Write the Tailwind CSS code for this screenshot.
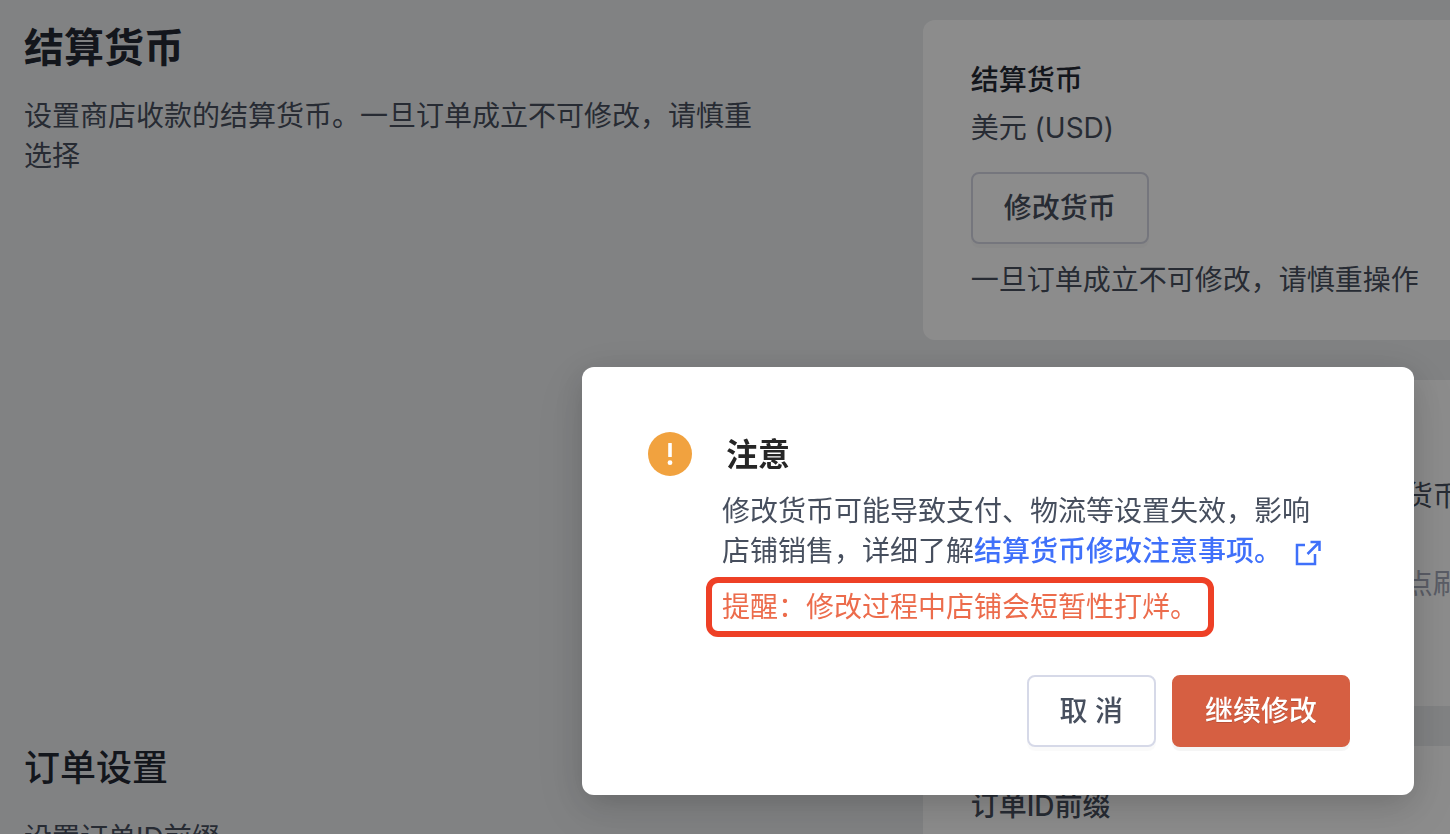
<!DOCTYPE html>
<html lang="zh-CN">
<head>
  <meta charset="UTF-8">
  <meta name="viewport" content="width=device-width, initial-scale=1.0">
  <title>结算货币</title>
  <script src="https://cdn.jsdelivr.net/npm/@tailwindcss/browser@4"></script>
</head>
<body class="h-screen overflow-hidden bg-[#ebedef] font-['Inter','Noto_Sans_CJK_SC',sans-serif] text-[28px] leading-10 text-[#474f5e]">
  <main class="grid grid-cols-[7fr_4fr] gap-y-10 pt-5">
    <!-- Settlement currency -->
    <section class="row-span-2 pl-6">
      <h1 class="text-[40px] leading-14 font-bold text-[#242833]">结算货币</h1>
      <p class="mt-5 max-w-[755px]">设置商店收款的结算货币。一旦订单成立不可修改，请慎重选择</p>
    </section>
    <section class="min-w-0 rounded-l-xl bg-white px-12 py-10 whitespace-nowrap">
      <h2 class="font-medium text-[#242833]">结算货币</h2>
      <p class="mt-2">美元 (USD)</p>
      <button type="button" class="mt-6 block h-18 rounded-lg border-2 border-[#d6d8e4] bg-white px-[31px] font-medium shadow-[0_4px_0_rgba(0,0,0,0.02)]">修改货币</button>
      <p class="mt-4">一旦订单成立不可修改，请慎重操作</p>
    </section>
    <section class="min-h-[326px] min-w-0 overflow-hidden rounded-l-xl bg-white pt-24 pl-12 whitespace-nowrap">
      <p class="pl-[434px]">货币</p>
      <p class="mt-12 pl-[434px] text-[#a3a8b8]">点刷新</p>
    </section>

    <!-- Order settings -->
    <section class="pl-6">
      <h2 class="text-[36px] leading-11 font-medium text-[#242833]">订单设置</h2>
      <p class="mt-7">设置订单ID前缀</p>
    </section>
    <section class="min-w-0 rounded-tl-xl bg-white px-12 py-10">
      <h3 class="font-medium">订单ID前缀</h3>
    </section>
  </main>

  <!-- Confirm dialog -->
  <div class="fixed inset-0 flex items-start justify-end bg-black/45 pt-[367px] pr-9">
    <div role="dialog" aria-modal="true" aria-labelledby="dialog-title" class="w-[832px] rounded-xl bg-white px-16 pt-16 pb-12 shadow-[0_8px_32px_rgba(0,0,0,0.15),0_16px_56px_12px_rgba(0,0,0,0.06)]">
      <div class="flex gap-7">
        <svg class="size-12 shrink-0" viewBox="0 0 48 48" aria-hidden="true">
          <circle cx="24" cy="23" r="22" fill="#f1a23f"/>
          <rect x="22.2" y="12" width="3.6" height="14" rx="0.5" fill="#fff"/>
          <circle cx="24" cy="31.7" r="2.4" fill="#fff"/>
        </svg>
        <div class="min-w-0 flex-1">
          <h2 id="dialog-title" class="pl-1 text-[32px] leading-12 font-bold text-[#262626]">注意</h2>
          <p class="mt-3 whitespace-nowrap">修改货币可能导致支付、物流等设置失效，影响<br>店铺销售，详细了解<a href="#" class="font-medium text-[#3f70fa]">结算货币修改注意事项。<svg class="ml-3 inline-block size-7" viewBox="0 0 28 28" fill="none" stroke="currentColor" stroke-width="2.5" aria-hidden="true">
            <path d="M11 6H3V25H21V15"/>
            <path d="M16.5 3H25.5V12M25 3.500L13.500 15"/>
          </svg></a></p>
          <p class="relative mt-4 inline-block text-[#ec6c4c]">提醒：修改过程中店铺会短暂性打烊。
            <span class="absolute -inset-x-4 -inset-y-[10px] rounded-xl border-6 border-[#ee4026]"></span>
          </p>
        </div>
      </div>
      <div class="mt-12 flex justify-end gap-4">
        <button type="button" class="h-18 rounded-lg border-2 border-[#d6d9e8] bg-white px-[31px] font-medium shadow-[0_4px_0_rgba(0,0,0,0.02)]">取 消</button>
        <button type="button" class="h-18 rounded-lg border-2 border-[#d65f42] bg-[#d65f42] px-[31px] font-medium text-white shadow-[0_4px_0_rgba(0,0,0,0.04)] text-shadow-2xs">继续修改</button>
      </div>
    </div>
  </div>
</body>
</html>
